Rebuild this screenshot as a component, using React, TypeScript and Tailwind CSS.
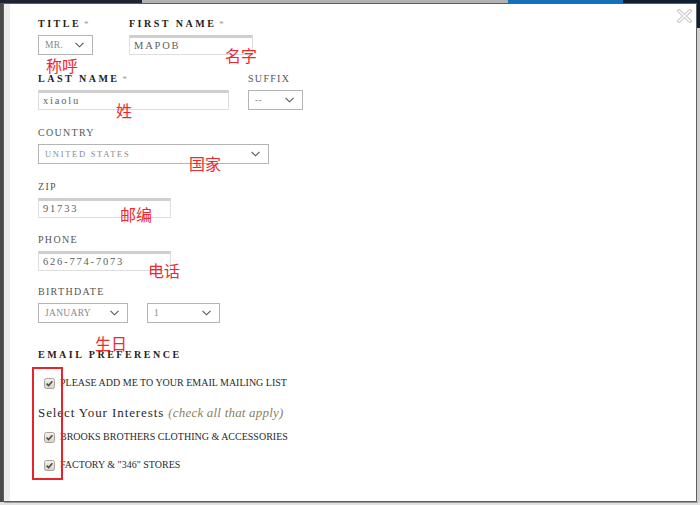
import React from "react";

const serif = { fontFamily: '"Liberation Serif", "Times New Roman", serif' };
const cjk = { fontFamily: '"Noto Sans CJK SC", "Noto Sans", sans-serif' };

const Label = ({ text, bold, req }: { text: string; bold?: boolean; req?: boolean }) => (
  <div
    className={`h-[12px] text-[10px] leading-[12px] whitespace-nowrap ${
      bold ? "font-bold tracking-[2.5px] text-[#1d1d1d]" : "tracking-[1.3px] text-[#555]"
    }`}
  >
    {text}
    {req && <span className="ml-[3px] text-[9px] font-normal text-[#999]">*</span>}
  </div>
);

const TextBox = ({ value, w }: { value: string; w: string }) => (
  <div
    className={`${w} mt-[5px] h-[20px] border border-[#dedede] border-t-[3px] border-t-[#cfcfcf] bg-white pl-[4px] flex items-center text-[10.5px] tracking-[1.8px] text-[#5e5e5e]`}
  >
    {value}
  </div>
);

const Chevron = () => (
  <svg width="9" height="6" viewBox="0 0 9 6" className="shrink-0">
    <polyline points="0.5,0.8 4.5,4.8 8.5,0.8" fill="none" stroke="#555" strokeWidth="1.1" />
  </svg>
);

const SelectBox = ({ value, w, small }: { value: string; w: string; small?: boolean }) => (
  <div
    className={`${w} mt-[5px] h-[20px] border border-[#b4b4b4] bg-white pl-[6px] pr-[8px] flex items-center justify-between text-[#8a8a8a] ${
      small ? "text-[8.5px] tracking-[1.7px]" : "text-[9.5px] tracking-[0.3px]"
    }`}
  >
    <span>{value}</span>
    <Chevron />
  </div>
);

const Check = () => (
  <svg width="11" height="11" viewBox="0 0 11 11" className="shrink-0">
    <defs>
      <linearGradient id="cb" x1="0" y1="0" x2="0" y2="1">
        <stop offset="0" stopColor="#f4f2ee" />
        <stop offset="1" stopColor="#d6d2ca" />
      </linearGradient>
    </defs>
    <rect x="0.5" y="0.5" width="10" height="10" rx="2" fill="url(#cb)" stroke="#a9a49b" />
    <polyline points="2.6,5.6 4.6,7.6 8.4,3.2" fill="none" stroke="#4f4a42" strokeWidth="1.5" />
  </svg>
);

const CheckRow = ({ text, className }: { text: string; className: string }) => (
  <div className={`flex items-center h-[16px] pl-[6px] gap-[5px] ${className}`}>
    <Check />
    <span className="text-[10px] leading-[16px] text-[#2a2a2a] whitespace-nowrap">{text}</span>
  </div>
);

const notes = [
  { t: "称呼", x: 46, y: 56 },
  { t: "名字", x: 225, y: 46 },
  { t: "姓", x: 116, y: 101 },
  { t: "国家", x: 189, y: 154 },
  { t: "邮编", x: 120, y: 205 },
  { t: "电话", x: 148, y: 261 },
  { t: "生日", x: 95, y: 334 },
];

export default function App() {
  return (
    <div className="relative w-[700px] h-[505px] overflow-hidden bg-[#e2e2e2]" style={serif}>
      {/* page behind the modal */}
      <div className="flex h-[3px]">
        <div className="w-[142px] bg-[#1c2433]" />
        <div className="w-[366px] bg-[#b2b2b2]" />
        <div className="w-[115px] bg-[#1470b8]" />
        <div className="flex-1 bg-[#0f1e30]" />
      </div>
      <div className="flex">
        <div className="w-[3px] h-[499px] bg-[#4a4a4a]" />

        {/* modal */}
        <div className="w-[694px] h-[499px] border border-[#5e5e5e] shadow-[1px_1px_0_#9a9a9a] bg-white flex">
          <div className="w-[6px] bg-[#ececec]" />
          <div className="flex-1 flex flex-col pl-[28px] pt-[14px]">
            <div className="flex gap-[36px]">
              <div>
                <Label text="TITLE" bold req />
                <SelectBox value="MR." w="w-[55px]" />
              </div>
              <div>
                <Label text="FIRST NAME" bold req />
                <TextBox value="MAPOB" w="w-[124px]" />
              </div>
            </div>

            <div className="flex gap-[19px] mt-[18px]">
              <div>
                <Label text="LAST NAME" bold req />
                <TextBox value="xiaolu" w="w-[191px]" />
              </div>
              <div>
                <Label text="SUFFIX" />
                <SelectBox value="--" w="w-[55px]" />
              </div>
            </div>

            <div className="mt-[17px]">
              <Label text="COUNTRY" />
              <SelectBox value="UNITED STATES" w="w-[231px]" small />
            </div>

            <div className="mt-[17px]">
              <Label text="ZIP" />
              <TextBox value="91733" w="w-[133px]" />
            </div>

            <div className="mt-[16px]">
              <Label text="PHONE" />
              <TextBox value="626-774-7073" w="w-[133px]" />
            </div>

            <div className="mt-[15px]">
              <Label text="BIRTHDATE" />
              <div className="flex gap-[19px]">
                <SelectBox value="JANUARY" w="w-[90px]" />
                <SelectBox value="1" w="w-[73px]" />
              </div>
            </div>

            <div className="mt-[26px]">
              <Label text="EMAIL PREFERENCE" bold />
            </div>
            <CheckRow text="PLEASE ADD ME TO YOUR EMAIL MAILING LIST" className="mt-[14px]" />

            <div className="mt-[14px] h-[16px] text-[13px] leading-[16px] tracking-[0.9px] text-[#2a2a2a] whitespace-nowrap">
              Select Your Interests{" "}
              <span className="italic tracking-[0.2px] text-[#8c7f62]">(check all that apply)</span>
            </div>
            <CheckRow text="BROOKS BROTHERS CLOTHING & ACCESSORIES" className="mt-[8px]" />
            <CheckRow text={'FACTORY & "346" STORES'} className="mt-[12px]" />
          </div>
        </div>

        <div className="flex-1 flex flex-col">
          <div className="h-[25px] bg-[#0f1e30]" />
          <div className="flex-1 bg-[#cfcfcf]" />
        </div>
      </div>

      {/* close button */}
      <svg className="absolute left-[677px] top-[9px]" width="15" height="14" viewBox="0 0 15 14">
        <g strokeLinecap="square">
          <line x1="2" y1="2" x2="13" y2="12" stroke="#c4c4c4" strokeWidth="3.6" />
          <line x1="13" y1="2" x2="2" y2="12" stroke="#c4c4c4" strokeWidth="3.6" />
          <line x1="2" y1="2" x2="13" y2="12" stroke="#fff" strokeWidth="1.6" />
          <line x1="13" y1="2" x2="2" y2="12" stroke="#fff" strokeWidth="1.6" />
        </g>
      </svg>

      {/* red annotations */}
      {notes.map((n) => (
        <div
          key={n.t}
          className="absolute text-[16px] leading-[18px] text-[#f0282d] whitespace-nowrap"
          style={{ ...cjk, left: n.x, top: n.y }}
        >
          {n.t}
        </div>
      ))}
      <div className="absolute left-[32px] top-[367px] w-[31px] h-[113px] border-2 border-[#e8232a]" />
    </div>
  );
}
